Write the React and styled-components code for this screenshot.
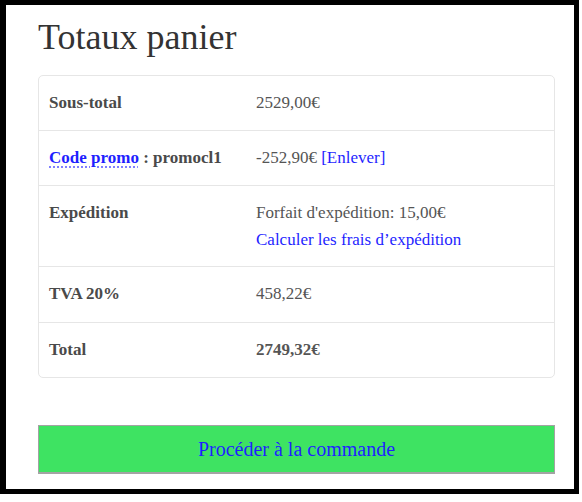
import React from 'react'
import styled, { createGlobalStyle } from 'styled-components'

const GlobalStyle = createGlobalStyle`
  html, body {
    margin: 0;
    padding: 0;
    background: #fff;
  }
  body {
    font-family: 'Liberation Serif', 'Times New Roman', serif;
  }
`

const rows = [
  { label: 'Sous-total', value: '2529,00€' },
  { label: 'promo', value: 'promo' },
  { label: 'Expédition', value: 'shipping' },
  { label: 'TVA 20%', value: '458,22€', tall: true },
  { label: 'Total', value: '2749,32€', strong: true },
]

const App = () => {
  // contenu d'une cellule de valeur
  const renderValue = row => {
    if (row.value === 'promo') {
      return (
        <>
          -252,90€ <Link href='#'>[Enlever]</Link>
        </>
      )
    }
    if (row.value === 'shipping') {
      return (
        <>
          <Line>Forfait d'expédition: 15,00€</Line>
          <Line $gap>
            <Link href='#'>Calculer les frais d’expédition</Link>
          </Line>
        </>
      )
    }
    return row.value
  }

  return (
    <>
      <GlobalStyle />
      <Frame>
        <Title>Totaux panier</Title>
        <Card>
          {rows.map((row, i) => (
            <Row key={i} $first={i === 0} $tall={row.tall}>
              <Label>
                {row.label === 'promo' ? (
                  <>
                    <Abbr>Code promo</Abbr> : promocl1
                  </>
                ) : (
                  row.label
                )}
              </Label>
              <Value $strong={row.strong} $multi={row.value === 'shipping'}>
                {renderValue(row)}
              </Value>
            </Row>
          ))}
        </Card>
        <Checkout>Procéder à la commande</Checkout>
      </Frame>
    </>
  )
}

export default App

const Frame = styled.div`
  box-sizing: border-box;
  width: 579px;
  height: 494px;
  border: 5px solid #000;
  border-left-width: 6px;
  padding: 11px 0 0 32px;
  display: flex;
  flex-direction: column;
`

const Title = styled.h2`
  margin: 0 0 16px;
  font-size: 36px;
  line-height: 43px;
  font-weight: normal;
  color: #333;
`

const Card = styled.div`
  width: 517px;
  box-sizing: border-box;
  border: 1px solid #e6e6e6;
  border-radius: 5px;
`

const Row = styled.div`
  display: grid;
  grid-template-columns: 207px 1fr;
  border-top: ${p => (p.$first ? 'none' : '1px solid #e6e6e6')};
  font-size: 17px;
  line-height: 24px;
  min-height: ${p => (p.$tall ? '55px' : '0')};
  align-items: center;
`

const Label = styled.div`
  padding: 15px 10px;
  align-self: start;
  font-weight: bold;
  color: #4a4a4a;
`

const Value = styled.div`
  padding: 15px 10px ${p => (p.$multi ? '14px' : '15px')};
  align-self: start;
  color: #555;
  font-weight: ${p => (p.$strong ? 'bold' : 'normal')};
`

const Line = styled.div`
  margin-top: ${p => (p.$gap ? '3px' : '0')};
`

const Link = styled.a`
  color: #1f1fff;
  text-decoration: none;
`

const Abbr = styled.span`
  color: #1f1fff;
  text-decoration: underline dotted #6a6aff;
  text-underline-offset: 4px;
`

const Checkout = styled.button`
  margin-top: 47px;
  width: 517px;
  height: 49px;
  box-sizing: border-box;
  background: #3ee362;
  border: 1px solid #a3a3a3;
  border-bottom-width: 2px;
  color: #1f1fff;
  font-family: 'Liberation Serif', 'Times New Roman', serif;
  font-size: 20px;
  padding: 0;
  cursor: pointer;
`
